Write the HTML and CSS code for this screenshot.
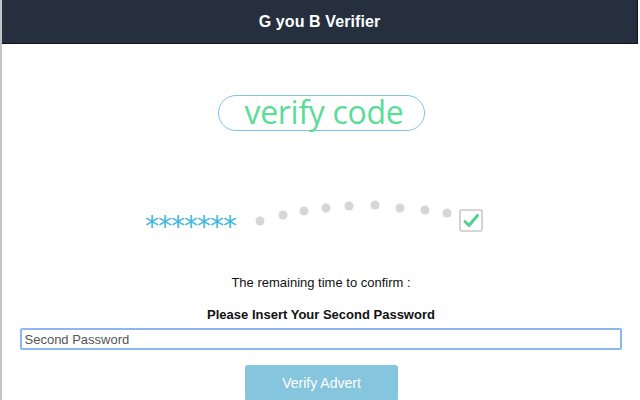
FILE: index.html
```html
<!DOCTYPE html>
<html>
<head>
<meta charset="utf-8">
<link rel="stylesheet" href="styles.css">
</head>
<body>
<div class="frame">
  <header class="topbar"><h1 class="title">G you B Verifier</h1></header>
  <main class="content">
    <div class="pill">verify code</div>
    <div class="progress">
      <span class="stars">*******</span>
      <svg class="dots" width="200" height="30" viewBox="0 0 200 30">
        <g fill="#d6d6d6">
          <circle cx="8" cy="24" r="4.5"/>
          <circle cx="31" cy="18" r="4.5"/>
          <circle cx="52" cy="14" r="4.5"/>
          <circle cx="74" cy="11" r="4.5"/>
          <circle cx="97" cy="9" r="4.5"/>
          <circle cx="123" cy="8" r="4.5"/>
          <circle cx="148" cy="11" r="4.5"/>
          <circle cx="173" cy="13" r="4.5"/>
          <circle cx="195" cy="16" r="4.5"/>
        </g>
      </svg>
      <svg class="check" width="24" height="23" viewBox="0 0 24 23">
        <rect x="1" y="1" width="22" height="21" rx="1.5" fill="#fff" stroke="#c9c9c9" stroke-width="1.6"/>
        <path d="M6 12.5 L10 16.5 L18.5 6.5" fill="none" stroke="#4fd18f" stroke-width="3" stroke-linecap="round" stroke-linejoin="round"/>
      </svg>
    </div>
    <p class="remaining">The remaining time to confirm :</p>
    <p class="prompt">Please Insert Your Second Password</p>
    <input class="field" type="text" placeholder="Second Password">
    <button class="btn">Verify Advert</button>
  </main>
</div>
</body>
</html>
```
FILE: styles.css
```css
html, body {
  margin: 0;
  padding: 0;
  background: #fff;
  font-family: "Liberation Sans", Arial, sans-serif;
}
.frame {
  width: 640px;
  height: 400px;
  overflow: hidden;
  border-left: 2px solid #c4c4c4;
  box-sizing: border-box;
}
.topbar {
  height: 44px;
  margin-right: 2px;
  background: #252f3e;
  border-bottom: 1px solid #0e131a;
  border-right: 1px solid #0e131a;
  box-sizing: border-box;
  display: flex;
  align-items: center;
  justify-content: center;
}
.title {
  margin: 0;
  color: #fff;
  font-size: 16px;
  font-weight: bold;
  letter-spacing: 0.1px;
}
.content {
  display: flex;
  flex-direction: column;
  align-items: center;
}
.pill {
  margin-top: 51px;
  width: 207px;
  height: 36px;
  box-sizing: border-box;
  border: 1.5px solid #7cc6e4;
  border-radius: 18px;
  color: #5bdc99;
  font-family: "Open Sans", "Noto Sans", sans-serif;
  font-size: 32px;
  line-height: 31px;
  text-align: center;
  padding-left: 6px;
  letter-spacing: -0.3px;
}
.progress {
  margin-top: 73px;
  height: 30px;
  display: flex;
  align-items: flex-start;
  margin-left: -14px;
}
.stars {
  color: #3fb7df;
  font-family: "DejaVu Sans", sans-serif;
  font-size: 28px;
  line-height: 30px;
  letter-spacing: -1px;
  margin-top: 8px;
  width: 107px;
}
.dots {
  margin-left: 0;
  margin-top: -7px;
}
.check {
  margin-left: 7px;
  margin-top: 5px;
}
.remaining {
  margin: 41px 0 0 0;
  font-size: 13px;
  color: #111;
  line-height: 16px;
}
.prompt {
  margin: 16px 0 0 0;
  font-size: 13px;
  font-weight: bold;
  color: #111;
  line-height: 16px;
}
.field {
  margin-top: 5px;
  width: 602px;
  height: 22px;
  box-sizing: border-box;
  border: 2px solid #8bb8f2;
  border-radius: 2px;
  padding: 0 3px;
  font-family: "Liberation Sans", Arial, sans-serif;
  font-size: 13px;
  color: #222;
  outline: none;
  margin-left: -1px;
}
.field::placeholder {
  color: #555;
}
.btn {
  margin-top: 15px;
  width: 153px;
  height: 36px;
  background: #86c5de;
  border: none;
  border-radius: 3px;
  color: #fff;
  font-family: "Liberation Sans", Arial, sans-serif;
  font-size: 14px;
  margin-left: 1px;
}
```
